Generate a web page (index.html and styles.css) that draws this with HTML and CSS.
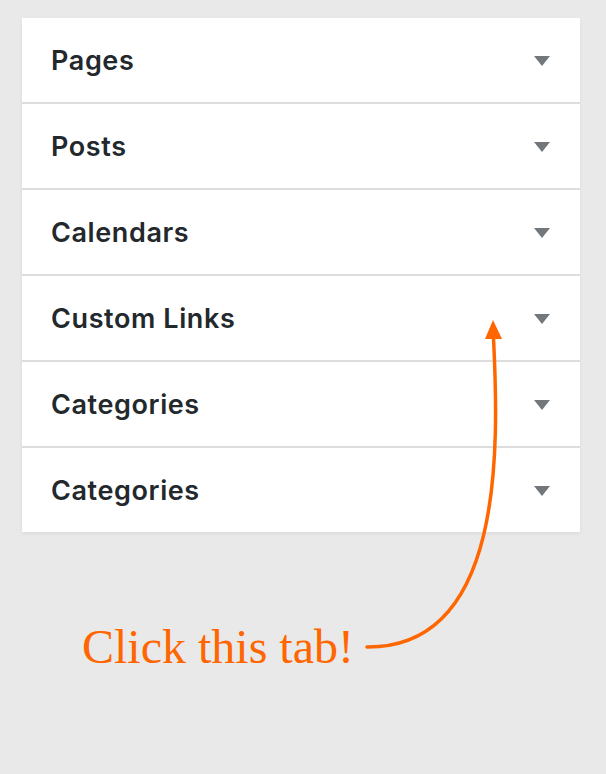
FILE: index.html
```html
<!DOCTYPE html>
<html lang="en">
<head>
  <meta charset="UTF-8" />
  <meta name="viewport" content="width=device-width, initial-scale=1.0"/>
  <title>Menu Panels</title>
  <link rel="stylesheet" href="styles.css">
</head>
<body>

  <!-- Accordion panel -->
  <div class="panel">
    <div class="panel-row"><h3>Pages</h3><span class="caret"></span></div>
    <div class="panel-row"><h3>Posts</h3><span class="caret"></span></div>
    <div class="panel-row"><h3>Calendars</h3><span class="caret"></span></div>
    <div class="panel-row"><h3>Custom Links</h3><span class="caret"></span></div>
    <div class="panel-row"><h3>Categories</h3><span class="caret"></span></div>
    <div class="panel-row"><h3>Categories</h3><span class="caret"></span></div>
  </div>

  <p class="hint">Click this tab!</p>

  <!-- Arrow drawn over the page -->
  <svg class="arrow" width="606" height="774" viewBox="0 0 606 774">
    <path d="M493.5 338 C499 450, 504 648, 367 647" fill="none" stroke="#ff6600" stroke-width="3.5" stroke-linecap="round"/>
    <polygon points="493,320 502,339 485,339" fill="#ff6600"/>
  </svg>

</body>
</html>
```

FILE: styles.css
```css
* {
  margin: 0;
  padding: 0;
  box-sizing: border-box;
}

body {
  background: #e9e9e9;
  padding: 18px 26px 0 22px;
  position: relative;
  min-height: 774px;
}

.panel {
  background: #ffffff;
  box-shadow: 0 2px 4px rgba(0,0,0,0.06);
}

.panel-row {
  height: 86px;
  display: flex;
  align-items: center;
  justify-content: space-between;
  padding: 0 30px 0 29px;
  border-bottom: 2px solid #dddddd;
}

.panel-row:last-child {
  height: 84px;
  border-bottom: none;
}

.panel-row h3 {
  font-family: 'Inter', sans-serif;
  font-size: 27px;
  font-weight: 600;
  letter-spacing: 0.6px;
  color: #23282d;
}

.caret {
  width: 0;
  height: 0;
  border-left: 8px solid transparent;
  border-right: 8px solid transparent;
  border-top: 10px solid #72777c;
  margin-top: 2px;
}

.hint {
  margin-top: 91px;
  padding-left: 60px;
  font-family: 'Liberation Serif', 'Times New Roman', serif;
  font-size: 48px;
  line-height: 48px;
  color: #ff6600;
}

.arrow {
  position: absolute;
  top: 0;
  left: 0;
  pointer-events: none;
}
```
